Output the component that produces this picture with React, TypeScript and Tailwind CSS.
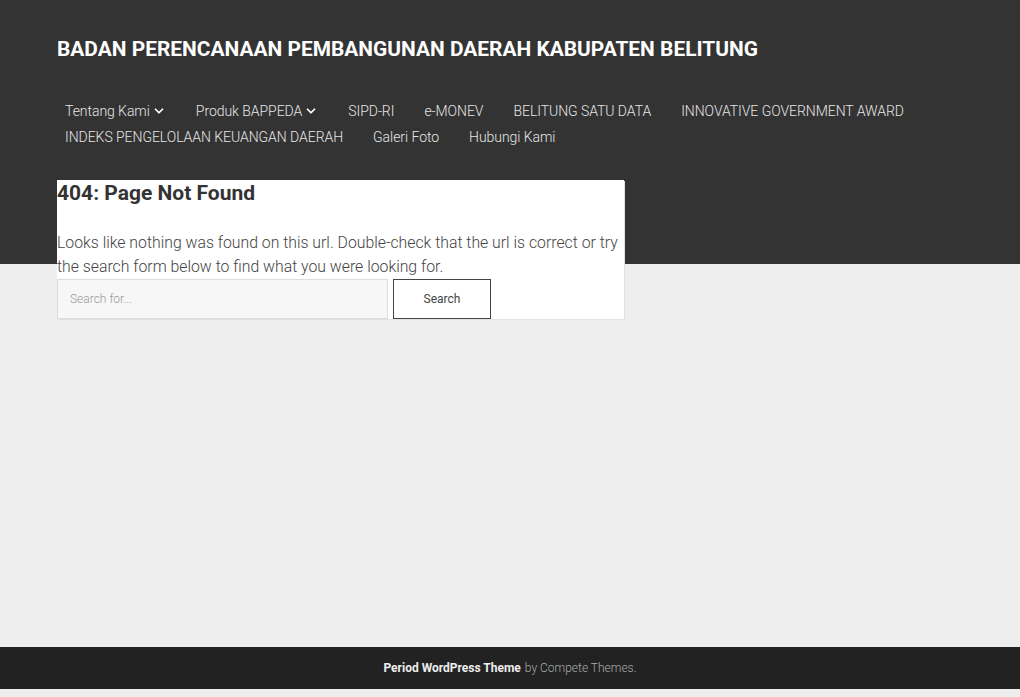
import { ChevronDown } from 'lucide-react';

const menu = [
  { label: 'Tentang Kami', sub: true },
  { label: 'Produk BAPPEDA', sub: true },
  { label: 'SIPD-RI' },
  { label: 'e-MONEV' },
  { label: 'BELITUNG SATU DATA' },
  { label: 'INNOVATIVE GOVERNMENT AWARD' },
  { label: 'INDEKS PENGELOLAAN KEUANGAN DAERAH' },
  { label: 'Galeri Foto' },
  { label: 'Hubungi Kami' },
];

export default function App() {
  return (
    <div className="min-h-screen bg-[#eeeeee] font-['Roboto',sans-serif]">
      <div className="min-h-[647px] bg-[linear-gradient(#333333_0,#333333_264px,#eeeeee_264px)]">
        <header className="px-[57px] pt-[36px]">
          <h1 className="text-[20.9px] leading-[26px] font-bold text-white">
            BADAN PERENCANAAN PEMBANGUNAN DAERAH KABUPATEN BELITUNG
          </h1>
          <nav className="mt-[36px] pl-2">
            <ul className="flex flex-wrap gap-x-[30px] max-w-[860px] text-[14px] leading-[26px] font-light tracking-[-0.05px] text-[#e6e6e6]">
              {menu.map((item) => (
                <li key={item.label} className="flex items-center gap-[2px]">
                  {item.label}
                  {item.sub && <ChevronDown className="w-[14px] h-[14px] text-white" strokeWidth={3} />}
                </li>
              ))}
            </ul>
          </nav>
        </header>

        <main className="px-[57px] pt-[30px]">
          <div className="w-[567px] bg-white shadow-[1px_1px_0_#e2e2e2]">
            <h2 className="text-[21px] leading-[26px] font-bold text-[#333333]">404: Page Not Found</h2>
            <p className="mt-[25px] text-[15.8px] leading-[24px] font-light text-[#444444]">
              Looks like nothing was found on this url. Double-check that the url is correct or try the search form below to find what you were looking for.
            </p>
            <form className="flex gap-[5px]" onSubmit={(e) => e.preventDefault()}>
              <input
                type="text"
                placeholder="Search for..."
                className="w-[331px] h-[40px] px-3 bg-[#f7f7f7] border border-[#dddddd] text-[12px] font-light placeholder:text-[#999999] outline-none"
              />
              <button className="w-[98px] h-[40px] border border-[#444444] bg-white text-[12px] text-[#444444]">
                Search
              </button>
            </form>
          </div>
        </main>
      </div>

      <footer className="h-[42px] bg-[#222222] flex items-center justify-center text-[12px]">
        <span className="font-bold text-[#eeeeee]">Period WordPress Theme</span>
        <span className="ml-1 font-light text-[#aaaaaa]">by Compete Themes.</span>
      </footer>
    </div>
  );
}
